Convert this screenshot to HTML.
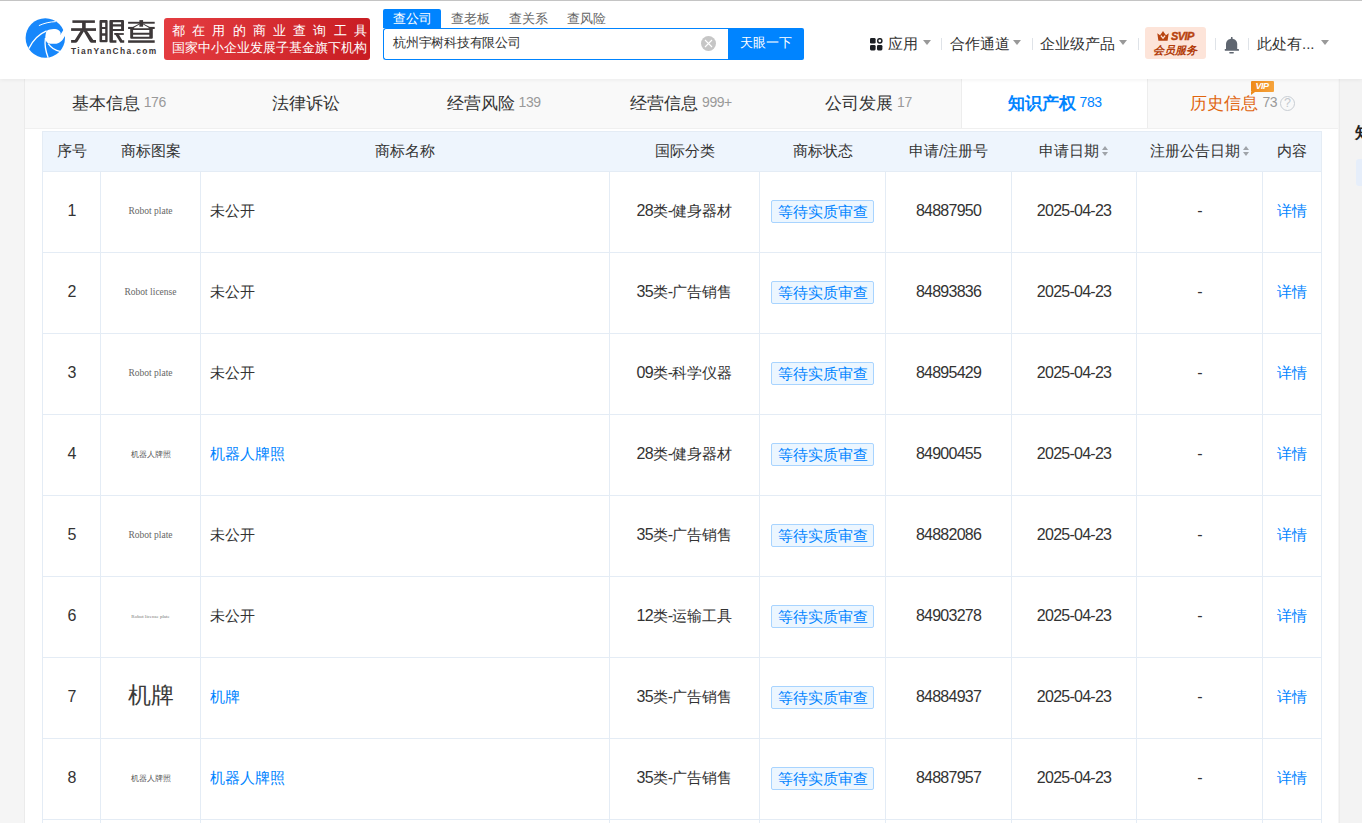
<!DOCTYPE html>
<html><head><meta charset="utf-8">
<style>
*{box-sizing:border-box;margin:0;padding:0}
html,body{width:1362px;height:823px;overflow:hidden}
body{font-family:"Liberation Sans",sans-serif;background:#f5f5f5;color:#333;position:relative}
.abs{position:absolute}
#hdr::before{content:"";position:absolute;left:0;top:0;width:1362px;height:1px;background:#c4c4c4}
#hdr{position:absolute;left:0;top:0;width:1362px;height:79px;background:#fff;box-shadow:0 1px 4px rgba(0,0,0,.06);z-index:5}
/* logo */
.logo-t{position:absolute;left:70px;top:15px;font-size:26px;font-weight:bold;color:#3b3536;letter-spacing:1px;line-height:32px}
.logo-s{position:absolute;left:71px;top:46px;font-size:8.4px;font-weight:bold;color:#3d3839;letter-spacing:1.38px;line-height:10px;white-space:nowrap}
.banner{position:absolute;left:164px;top:18px;width:206px;height:42px;border-radius:3px;background:linear-gradient(100deg,#e43d41,#c81c22);color:#fff}
.banner .l1{position:absolute;left:8px;font-size:13px;line-height:14px;letter-spacing:7.2px;white-space:nowrap;top:5.5px}
.banner .l2{position:absolute;left:8px;top:22.5px;font-size:12.7px;line-height:14px;white-space:nowrap}
/* search */
.stabs{position:absolute;left:383px;top:9px;height:19px}
.stab{position:absolute;top:9px;height:19px;font-size:13px;line-height:19px;color:#666;white-space:nowrap}
.stab.on{background:#0084ff;color:#fff;border-radius:2px 2px 0 0;width:58px;text-align:center;left:0}
.sinput{position:absolute;left:383px;top:28px;width:346px;height:32px;border:1px solid #0084ff;border-right:none;border-radius:3px 0 0 3px;background:#fff}
.sinput .v{position:absolute;left:9px;top:6px;font-size:13px;line-height:16px;color:#333;letter-spacing:-0.25px}
.clr{position:absolute;left:317px;top:7px;width:15px;height:15px;border-radius:50%;background:#c6c6c6}
.sbtn{position:absolute;left:728px;top:28px;width:76px;height:32px;background:#0084ff;border-radius:0 2px 2px 0;color:#fff;font-size:13px;line-height:30px;text-align:center}
/* nav */
.nav{position:absolute;top:34px;height:20px;font-size:15px;line-height:20px;color:#333;white-space:nowrap}
.tri{position:absolute;width:0;height:0;border-left:4px solid transparent;border-right:4px solid transparent;border-top:5px solid #999}
.sep{position:absolute;top:38px;width:1px;height:12px;background:#dfe3e8}
.svip{position:absolute;left:1145px;top:27px;width:61px;height:32px;background:#fde4d9;border-radius:3px}
/* tabs */
#tabs{position:absolute;left:25px;top:79px;width:1313px;height:50px;background:#f9f9f9;display:flex;border-bottom:1px solid #f0f0f0}
#tabs .t{flex:1;text-align:center;font-size:17px;line-height:49px;height:49px;color:#333;white-space:nowrap;position:relative}
#tabs .t .n{font-size:14px;color:#999;margin-left:4px;position:relative;top:-2px;letter-spacing:-0.45px}
#tabs .t.on{background:#fff;color:#0084ff;font-weight:bold;border-left:1px solid #ededed;border-right:1px solid #ededed;flex:0 0 187px;left:-1px}
#tabs .t.on .n{color:#0084ff;font-weight:normal}
#tabs .t.hist{color:#e0650f;padding-right:1.5px}
#tabs .q{display:inline-block;width:15px;height:15px;border:1.2px solid #c8cdd3;border-radius:50%;margin-left:3px;position:relative;top:1.5px}
#tabs .q::after{content:"?";position:absolute;left:0;top:0;width:12.6px;text-align:center;font-size:12.5px;line-height:13px;color:#c3c8ce;font-weight:normal}
#tabs .vip{position:absolute;left:102px;top:2px;width:23px;height:11px;background:linear-gradient(90deg,#ef8a1a,#f6a43c);border-radius:1px;color:#fff;font-size:9px;line-height:11px;font-weight:bold;font-style:italic;text-align:center;letter-spacing:-0.5px;text-indent:-1px}
#tabs .vip::after{content:"";position:absolute;left:0;top:11px;border-top:3px solid #ef8a1a;border-right:4px solid transparent}
#main{position:absolute;left:25px;top:129px;width:1313px;height:694px;background:#fff}
#lline{position:absolute;left:24px;top:79px;width:1px;height:744px;background:#ebebeb}
#side{position:absolute;left:1339px;top:79px;width:23px;height:744px;background:#f3f3f3;border-left:1px solid #ececec}
table{position:absolute;left:42px;top:131px;border-collapse:collapse;table-layout:fixed;width:1280px}
td,th{border:1px solid #e4ecf5;text-align:center;font-size:15px;color:#333;font-weight:normal;white-space:nowrap}
th{height:40px;background:#eef5fd;border-left:0;border-right:0}
th:first-child{border-left:1px solid #e4ecf5}
th:last-child{border-right:1px solid #e4ecf5}
td{height:81px;padding-bottom:2px}
td.nm{text-align:left;padding-left:9px}
.tag{display:inline-block;height:23px;line-height:21px;width:103px;text-align:center;border:1px solid #a8d4ff;background:#ecf6ff;color:#0084ff;border-radius:2px;font-size:15px}
a{color:#0084ff;text-decoration:none}
.d{font-size:16px;letter-spacing:-0.75px}
.srt{display:inline-block;width:7px;height:11px;margin-left:3px;vertical-align:-1px;position:relative}
.srt::before{content:"";position:absolute;left:0;top:0;border-left:3.5px solid transparent;border-right:3.5px solid transparent;border-bottom:4.5px solid #9fa3a9}
.srt::after{content:"";position:absolute;left:0;top:5.5px;border-left:3.5px solid transparent;border-right:3.5px solid transparent;border-top:4.5px solid #9fa3a9}
.lg{font-family:"Liberation Serif",serif;color:#666;font-size:9.5px;position:relative;top:-2.5px}
.lgc{font-size:8px;color:#555;position:relative;top:-3px}
.lgt{font-family:"Liberation Serif",serif;color:#777;font-size:5px;position:relative;top:-4px}
.lgb{font-size:23px;color:#3a3a3a;position:relative;top:-1.5px;font-weight:300}
</style></head><body>
<div id="hdr">
  <svg class="abs" style="left:22px;top:14px" width="48" height="48" viewBox="0 0 48 48">
    <circle cx="23.3" cy="24" r="19.7" fill="#1787fb"/>
    <path d="M24.6 16.9 C28 14.6 34 14.2 37 16.4 C38.6 17.6 39 19.2 38.4 20.8 L44 21.6 L42.6 22.2 C41 26.5 37.5 29.6 32.6 29.8 C30 29.9 27.5 29.6 26.2 29.2 C24.3 28.2 23.3 26.4 23.3 24.3 C23.3 21.4 23.8 18.8 24.6 16.9 Z" fill="#fff"/>
    <path d="M38.4 20.8 L42 15 L45 16 L45 23 L42.6 22.2 Z" fill="#fff"/>
    <path d="M16.9 11.6 C22 9.2 28 7.8 33.8 7.6" stroke="#fff" stroke-width="1" fill="none"/>
    <path d="M6.8 34.6 C11 26 17 20 24.6 16.9" stroke="#fff" stroke-width="1.3" fill="none"/>
    <path d="M23.4 24 C22.4 31 23.5 37 26.2 43.8" stroke="#fff" stroke-width="1.3" fill="none"/>
    <path d="M26.2 29.6 C29 33.5 33 36.5 38 37.4" stroke="#fff" stroke-width="1.3" fill="none"/>
  </svg>
  <svg class="abs" style="left:0;top:0" width="160" height="50" viewBox="0 0 160 50"><g fill="#3d3839">
    <rect x="72.4" y="20.3" width="22.5" height="2.6"/>
    <rect x="82.1" y="22" width="3.6" height="8"/>
    <rect x="71.1" y="28.2" width="24.9" height="2.7"/>
    <path d="M80.8 30.5 L84.4 30.5 L77.6 41.4 Q76.6 42.8 75.4 42.8 L71.1 42.8 L71.1 40.1 L74.8 40.1 Z"/>
    <path d="M83.3 30.5 L86.8 30.5 L93.3 40.1 L96 40.1 L96 42.8 L91.6 42.8 Q90.5 42.8 89.7 41.5 Z"/>
    <path d="M100.6 20.1 L106.6 20.1 Q107.6 20.1 107.6 21.1 L107.6 41.3 Q107.6 42.3 106.6 42.3 L100.6 42.3 Q99.5 42.3 99.5 41.3 L99.5 21.1 Q99.5 20.1 100.6 20.1 Z M102.1 22.7 L102.1 26.9 L105.2 26.9 L105.2 22.7 Z M102.1 29.1 L102.1 33.3 L105.2 33.3 L105.2 29.1 Z M102.1 35.7 L102.1 39.9 L105.2 39.9 L105.2 35.7 Z" fill-rule="evenodd"/>
    <path d="M110.4 20.1 L123 20.1 Q124 20.1 124 21.1 L124 30.9 L112.9 30.9 L112.9 40.3 L116.4 40.3 L116.4 42.8 L110.6 42.8 Q109.4 42.8 109.4 41.6 L109.4 21.1 Q109.4 20.1 110.4 20.1 Z M112.9 22.3 L112.9 24.3 L121.1 24.3 L121.1 22.3 Z M112.9 26.5 L112.9 28.9 L121.1 28.9 L121.1 26.5 Z" fill-rule="evenodd"/>
    <rect x="114.3" y="33.1" width="9.5" height="1.8"/>
    <path d="M114.3 33.1 L117.9 33.1 L122.3 40.3 L124.2 40.3 L124.2 42.8 L120.4 42.8 Z"/>
    <rect x="139.4" y="20.1" width="3.7" height="6.6"/>
    <rect x="128.1" y="21.8" width="26.6" height="1.9"/>
    <path d="M139.4 23.6 L141 23.6 L132.5 28.6 L130 28.6 Z"/>
    <path d="M141.5 23.6 L143.1 23.6 L152.6 28.6 L150.2 28.6 Z"/>
    <rect x="128.1" y="26.9" width="6" height="2.1"/>
    <rect x="148.7" y="26.9" width="6" height="2.1"/>
    <path d="M130.2 28.2 L152.8 28.2 L152.8 37.7 Q152.8 38.7 151.8 38.7 L131.2 38.7 Q130.2 38.7 130.2 37.7 Z M133.1 30 L133.1 32.7 L149.3 32.7 L149.3 30 Z M133.1 34.7 L133.1 36.8 L149.3 36.8 L149.3 34.7 Z" fill-rule="evenodd"/>
    <rect x="128.1" y="40.3" width="26.6" height="2.5"/>
  </g></svg>
  <div class="logo-s">TianYanCha.com</div>
  <div class="banner"><div class="l1">都在用的商业查询工具</div><div class="l2">国家中小企业发展子基金旗下机构</div></div>
  <div class="stab on" style="left:383px">查公司</div>
  <div class="stab" style="left:451px">查老板</div>
  <div class="stab" style="left:509px">查关系</div>
  <div class="stab" style="left:567px">查风险</div>
  <div class="sinput"><div class="v">杭州宇树科技有限公司</div><div class="clr"><svg width="15" height="15" viewBox="0 0 15 15"><path d="M4 4L11 11M11 4L4 11" stroke="#fff" stroke-width="1.1"/></svg></div></div>
  <div class="sbtn">天眼一下</div>
  <svg class="abs" style="left:870px;top:38px" width="14" height="14" viewBox="0 0 14 14">
    <rect x="0" y="0" width="5.6" height="5.6" rx="1.3" fill="#1c1f24"/>
    <circle cx="9.8" cy="2.8" r="2.1" fill="none" stroke="#1c1f24" stroke-width="1.5"/>
    <rect x="0" y="7" width="5.6" height="5.4" rx="1.3" fill="#1c1f24"/>
    <rect x="7" y="7" width="5.4" height="5.4" rx="1.3" fill="#1c1f24"/>
  </svg>
  <div class="nav" style="left:888px">应用</div>
  <div class="tri" style="left:923px;top:40px"></div>
  <div class="sep" style="left:941px"></div>
  <div class="nav" style="left:950px">合作通道</div>
  <div class="tri" style="left:1013px;top:40px"></div>
  <div class="sep" style="left:1032px"></div>
  <div class="nav" style="left:1040px">企业级产品</div>
  <div class="tri" style="left:1119px;top:40px"></div>
  <div class="sep" style="left:1138px"></div>
  <div class="svip">
    <svg class="abs" style="left:12px;top:4px" width="12" height="10" viewBox="0 0 12 10">
      <path d="M0.3 2.2 L3 4.3 L5.2 1.2 L6 0 L6.8 1.2 L9 4.3 L11.7 2.2 L10.6 9.7 L1.4 9.7 Z" fill="#b8420f"/>
      <path d="M3.9 4.6 L6 7.3 L8.1 4.6" stroke="#fde4d9" stroke-width="1.3" fill="none"/>
    </svg>
    <div class="abs" style="left:26px;top:3px;font-size:11px;line-height:12px;font-weight:bold;font-style:italic;color:#b8420f;letter-spacing:-0.6px;-webkit-text-stroke:0.4px #b8420f">SVIP</div>
    <div class="abs" style="left:8px;top:15.5px;font-size:11px;line-height:14px;font-weight:bold;font-style:italic;color:#b23c0a;white-space:nowrap;letter-spacing:0px">会员服务</div>
  </div>
  <div class="sep" style="left:1215px"></div>
  <svg class="abs" style="left:1224px;top:36px" width="16" height="18" viewBox="0 0 16 18">
    <rect x="7" y="1" width="1.5" height="2.5" fill="#5f6670"/>
    <path d="M2 13.2 L2 8.3 C2 4.8 4.5 2.7 7.7 2.7 C10.9 2.7 13.2 4.8 13.2 8.3 L13.2 13.2 Z" fill="#5f6670"/>
    <rect x="0.8" y="13" width="14.2" height="1.8" rx="0.4" fill="#5f6670"/>
    <rect x="5.2" y="16.1" width="4.7" height="1.4" rx="0.7" fill="#5f6670"/>
  </svg>
  <div class="sep" style="left:1248px"></div>
  <div class="nav" style="left:1257px">此处有...</div>
  <div class="tri" style="left:1321px;top:40px"></div>
</div>
<div id="tabs">
  <div class="t">基本信息<span class="n">176</span></div>
  <div class="t">法律诉讼</div>
  <div class="t">经营风险<span class="n">139</span></div>
  <div class="t">经营信息<span class="n">999+</span></div>
  <div class="t">公司发展<span class="n">17</span></div>
  <div class="t on">知识产权<span class="n">783</span></div>
  <div class="t hist">历史信息<span class="n">73</span><span class="q"></span><span class="vip">VIP</span></div>
</div>
<div id="main"></div><div id="lline"></div>
<div id="side"><div class="abs" style="left:15px;top:44px;font-size:16px;line-height:20px;font-weight:bold;color:#222;white-space:nowrap">知识产权</div><div class="abs" style="left:16px;top:80px;width:40px;height:27px;background:#e6eefa;border-radius:3px"></div></div>
<table>
<colgroup><col style="width:58px"><col style="width:100px"><col style="width:409px"><col style="width:150px"><col style="width:126px"><col style="width:126px"><col style="width:125px"><col style="width:126px"><col style="width:59px"></colgroup>
<tr><th>序号</th><th>商标图案</th><th>商标名称</th><th>国际分类</th><th>商标状态</th><th>申请/注册号</th><th>申请日期<i class="srt"></i></th><th>注册公告日期<i class="srt"></i></th><th>内容</th></tr>
<tr><td><span class="d">1</span></td><td><span class="lg">Robot plate</span></td><td class="nm">未公开</td><td><span class="d">28</span>类<span class="d">-</span>健身器材</td><td><span class="tag">等待实质审查</span></td><td><span class="d">84887950</span></td><td><span class="d">2025-04-23</span></td><td><span class="d">-</span></td><td><a>详情</a></td></tr>
<tr><td><span class="d">2</span></td><td><span class="lg">Robot license</span></td><td class="nm">未公开</td><td><span class="d">35</span>类<span class="d">-</span>广告销售</td><td><span class="tag">等待实质审查</span></td><td><span class="d">84893836</span></td><td><span class="d">2025-04-23</span></td><td><span class="d">-</span></td><td><a>详情</a></td></tr>
<tr><td><span class="d">3</span></td><td><span class="lg">Robot plate</span></td><td class="nm">未公开</td><td><span class="d">09</span>类<span class="d">-</span>科学仪器</td><td><span class="tag">等待实质审查</span></td><td><span class="d">84895429</span></td><td><span class="d">2025-04-23</span></td><td><span class="d">-</span></td><td><a>详情</a></td></tr>
<tr><td><span class="d">4</span></td><td><span class="lgc">机器人牌照</span></td><td class="nm"><a>机器人牌照</a></td><td><span class="d">28</span>类<span class="d">-</span>健身器材</td><td><span class="tag">等待实质审查</span></td><td><span class="d">84900455</span></td><td><span class="d">2025-04-23</span></td><td><span class="d">-</span></td><td><a>详情</a></td></tr>
<tr><td><span class="d">5</span></td><td><span class="lg">Robot plate</span></td><td class="nm">未公开</td><td><span class="d">35</span>类<span class="d">-</span>广告销售</td><td><span class="tag">等待实质审查</span></td><td><span class="d">84882086</span></td><td><span class="d">2025-04-23</span></td><td><span class="d">-</span></td><td><a>详情</a></td></tr>
<tr><td><span class="d">6</span></td><td><span class="lgt">Robot license plate</span></td><td class="nm">未公开</td><td><span class="d">12</span>类<span class="d">-</span>运输工具</td><td><span class="tag">等待实质审查</span></td><td><span class="d">84903278</span></td><td><span class="d">2025-04-23</span></td><td><span class="d">-</span></td><td><a>详情</a></td></tr>
<tr><td><span class="d">7</span></td><td><span class="lgb">机牌</span></td><td class="nm"><a>机牌</a></td><td><span class="d">35</span>类<span class="d">-</span>广告销售</td><td><span class="tag">等待实质审查</span></td><td><span class="d">84884937</span></td><td><span class="d">2025-04-23</span></td><td><span class="d">-</span></td><td><a>详情</a></td></tr>
<tr><td><span class="d">8</span></td><td><span class="lgc">机器人牌照</span></td><td class="nm"><a>机器人牌照</a></td><td><span class="d">35</span>类<span class="d">-</span>广告销售</td><td><span class="tag">等待实质审查</span></td><td><span class="d">84887957</span></td><td><span class="d">2025-04-23</span></td><td><span class="d">-</span></td><td><a>详情</a></td></tr>
<tr><td></td><td></td><td class="nm"></td><td></td><td></td><td></td><td></td><td></td><td></td></tr>
</table>
</body></html>
